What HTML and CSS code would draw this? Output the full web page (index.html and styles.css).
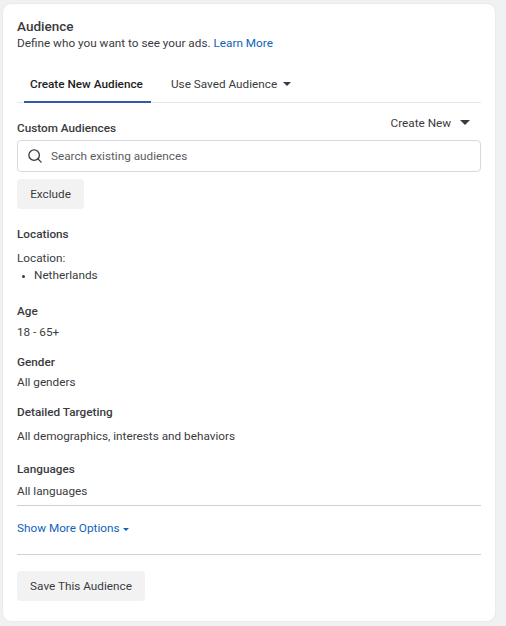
FILE: index.html
```html
<!DOCTYPE html>
<html lang="en">
<head>
    <meta charset="UTF-8">
    <title>Audience</title>
    <link rel="stylesheet" href="styles.css">
</head>
<body>
    <section class="card">
        <h1 class="title">Audience</h1>
        <p class="intro">Define who you want to see your ads. <a class="link">Learn More</a></p>

        <div class="tabs">
            <div class="tab tab-active">Create New Audience</div>
            <div class="tab">Use Saved Audience <span class="caret"></span></div>
        </div>

        <div class="custom-head">
            <div class="label">Custom Audiences</div>
            <div class="create-new">Create New <span class="caret caret-big"></span></div>
        </div>
        <div class="search">
            <svg class="search-icon" width="14" height="14" viewBox="0 0 16 16" fill="none" stroke="#3a3b3d" stroke-width="1.5">
                <circle cx="7" cy="7" r="6"/>
                <path d="M11.2 11.2 L15 15" stroke-linecap="round"/>
            </svg>
            <span>Search existing audiences</span>
        </div>
        <button class="btn btn-exclude">Exclude</button>

        <div class="label label-locations">Locations</div>
        <div class="value value-location">Location:</div>
        <ul class="places">
            <li>Netherlands</li>
        </ul>

        <div class="label label-age">Age</div>
        <div class="value value-age">18 - 65+</div>

        <div class="label label-gender">Gender</div>
        <div class="value value-gender">All genders</div>

        <div class="label label-detailed">Detailed Targeting</div>
        <div class="value value-detailed">All demographics, interests and behaviors</div>

        <div class="label label-languages">Languages</div>
        <div class="value value-languages">All languages</div>

        <div class="more">
            <a class="link">Show More Options</a>
            <span class="caret caret-small"></span>
        </div>

        <button class="btn btn-save">Save This Audience</button>
    </section>
</body>
</html>
```

FILE: styles.css
```css
* {
  box-sizing: border-box;
}

body {
  margin: 0;
  height: 626px;
  overflow: hidden;
  padding: 4px 0 0 3px;
  background: #f0f1f2;
  font-family: Roboto, "Liberation Sans", sans-serif;
  font-size: 11.75px;
  line-height: 16px;
  color: #3a3b3e;
}

.card {
  width: 492px;
  height: 617px;
  padding: 14px 14px 0;
  background: #fff;
  border-radius: 8px;
  box-shadow: 0 0 2px rgba(0, 0, 0, 0.1);
}

.title {
  margin: 0;
  font-size: 13.5px;
  line-height: 16px;
  font-weight: 500;
}

.intro {
  margin: 1px 0 0;
}

.link {
  color: #0f62bd;
}

.tabs {
  display: flex;
  gap: 14px;
  margin-top: 16px;
  padding-left: 7px;
  height: 36px;
  border-bottom: 1px solid #e6e7ea;
}

.tab {
  padding: 9px 6px 0;
  height: 36px;
}

.tab-active {
  width: 127px;
  font-weight: 500;
  color: #1c1e21;
  white-space: nowrap;
  border-bottom: 2px solid #2f5bab;
}

.caret {
  display: inline-block;
  width: 0;
  height: 0;
  margin-left: 3px;
  vertical-align: 2px;
  border-left: 4px solid transparent;
  border-right: 4px solid transparent;
  border-top: 4px solid #3a3b3e;
}

.caret-big {
  margin-left: 6px;
  border-left-width: 5px;
  border-right-width: 5px;
  border-top-width: 5px;
}

.caret-small {
  margin-left: 1px;
  vertical-align: 1px;
  border-left-width: 3.5px;
  border-right-width: 3.5px;
  border-top-width: 3.5px;
  border-top-color: #0f62bd;
}

.custom-head {
  display: flex;
  justify-content: space-between;
  padding-right: 11px;
  margin-top: 17px;
}

.create-new {
  margin-top: -5px;
}

.label {
  font-weight: 500;
}

.search {
  display: flex;
  align-items: center;
  gap: 9px;
  height: 32px;
  margin-top: 4px;
  padding-left: 10px;
  border: 1px solid #d8dadd;
  border-radius: 4px;
  color: #5a5c60;
}

.btn {
  display: block;
  height: 30px;
  padding: 0;
  border: none;
  border-radius: 4px;
  background: #f2f2f3;
  font: inherit;
  color: #3a3b3e;
  white-space: nowrap;
}

.btn-exclude {
  width: 67px;
  margin-top: 7px;
}

.label-locations {
  margin-top: 17px;
}

.value-location {
  margin-top: 8px;
}

.places {
  margin: 1px 0 0;
  padding-left: 17px;
}

.places li::marker {
  font-size: 9px;
}

.label-age {
  margin-top: 20px;
}

.value-age {
  margin-top: 5px;
}

.label-gender {
  margin-top: 14px;
}

.value-gender {
  margin-top: 4px;
}

.label-detailed {
  margin-top: 14px;
}

.value-detailed {
  margin-top: 8px;
}

.label-languages {
  margin-top: 17px;
}

.value-languages {
  margin-top: 6px;
}

.more {
  margin-top: 6px;
  height: 50px;
  padding-top: 14px;
  border-top: 1px solid #cfd0d2;
  border-bottom: 1px solid #cfd0d2;
}

.btn-save {
  width: 128px;
  margin-top: 16px;
}
```
